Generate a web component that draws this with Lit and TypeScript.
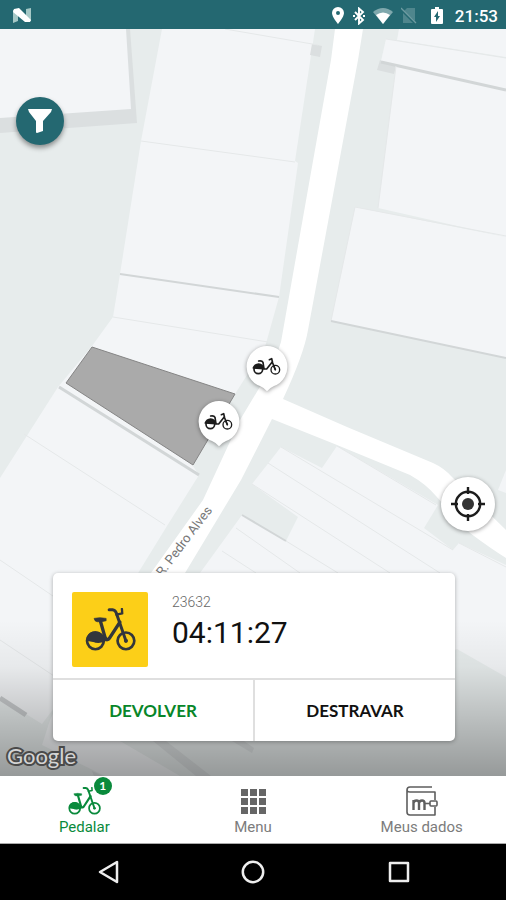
import { LitElement, html, css, svg } from "lit";
import { customElement, property, state } from "lit/decorators.js";
import { classMap } from "lit/directives/class-map.js";

const cityBike = svg`
  <g fill="none" stroke="currentColor" stroke-linecap="round" stroke-linejoin="round">
    <circle cx="31" cy="98" r="25" stroke-width="8" />
    <circle cx="122" cy="98" r="25" stroke-width="8" />
    <path d="M45 36 L61 92 Q66 98 73 90 L104 42" stroke-width="10" />
    <path d="M31 98 H56 L62 90" stroke-width="9" />
    <path d="M72 5 H82 Q90 6 93 14 L122 98" stroke-width="9" />
    <path d="M94 20 L111 16 L110 3" stroke-width="7" />
  </g>
  <path d="M27 31 Q44 27 63 31 V38 Q50 42 36 41 Q28 39 27 31 Z" fill="currentColor" stroke="currentColor" stroke-width="2" />
  <path d="M4 98 A27 27 0 0 1 54 82 L60 98 L40 104 Z" fill="currentColor" />
  <circle cx="122" cy="98" r="6" fill="currentColor" />
`;

@customElement("bike-icon")
export class BikeIcon extends LitElement {
  static styles = css`
    :host { display: block; }
    svg { display: block; width: 100%; height: auto; }
  `;
  render() {
    return html`<svg viewBox="0 0 152 128" aria-hidden="true">${cityBike}</svg>`;
  }
}

@customElement("status-bar")
export class StatusBar extends LitElement {
  static styles = css`
    :host {
      display: flex;
      align-items: center;
      justify-content: space-between;
      height: 29px;
      padding: 2px 8px 0 13px;
      box-sizing: border-box;
      background: #246871;
      color: #fff;
      font: 500 17px/20px Roboto, sans-serif;
    }
    svg { display: block; }
    .icons { display: flex; align-items: center; }
    .place { margin-right: 9px; }
    .bt { margin-right: 8px; }
    .wifi { margin-right: 8px; }
    .sim { margin-right: 14px; }
    .battery { margin-right: 12px; }
  `;
  render() {
    return html`
      <svg width="18" height="15" viewBox="0 0 18 15" aria-hidden="true">
        <path d="M0 2 L5 1 V13 L0 15 Z" fill="#a5c8c6" />
        <path d="M13 1 L18 0 V13 L13 14 Z" fill="#a5c8c6" />
        <path d="M1 1 L6 0 L18 12 L17 14 L12 14 L0 4 Z" fill="#fff" />
      </svg>
      <div class="icons">
        <svg class="place" width="12" height="17" viewBox="0 0 12 17" aria-hidden="true">
          <path fill-rule="evenodd" d="M6 0 A6 6 0 0 1 12 6 C12 10 6 17 6 17 C6 17 0 10 0 6 A6 6 0 0 1 6 0 Z M6 4 A2 2 0 1 0 6 8 A2 2 0 1 0 6 4 Z" fill="#fff" />
        </svg>
        <svg class="bt" width="12" height="18" viewBox="0 0 12 18" fill="none" stroke="#fff" stroke-width="1.9" aria-hidden="true">
          <path d="M2 5 L10 13 L6 16.5 V1.5 L10 5 L2 13" />
          <path d="M0 9 H2 M10 9 H12" stroke-width="2" />
        </svg>
        <svg class="wifi" width="20" height="16" viewBox="0 0 20 16" aria-hidden="true">
          <path d="M0 4 Q10 -4 20 4 L10 16 Z" fill="#7fa8ad" />
          <path d="M3 7 Q10 2 17 7 L10 16 Z" fill="#fff" />
        </svg>
        <svg class="sim" width="16" height="17" viewBox="0 0 16 17" aria-hidden="true">
          <path d="M6 1 H14 V14 L3 4 Z M2 6 L12 16 H2 Z" fill="#4f868d" />
          <path d="M0 1 L15 16" stroke="#6e9ba1" stroke-width="1.3" />
        </svg>
        <svg class="battery" width="12" height="17" viewBox="0 0 12 17" aria-hidden="true">
          <path d="M4 0 H8 V2 H11 Q12 2 12 3 V16 Q12 17 11 17 H1 Q0 17 0 16 V3 Q0 2 1 2 H4 Z" fill="#fff" />
          <path d="M7 4 L3 10 H5 V15 L9 9 H7 Z" fill="#246871" />
        </svg>
        <time>21:53</time>
      </div>
    `;
  }
}

@customElement("street-map")
export class StreetMap extends LitElement {
  static styles = css`
    :host { display: block; background: #e7ecec; }
    svg { display: block; width: 100%; height: 100%; }
    .block { fill: #f3f5f7; }
    .shade { fill: #dbdfe0; }
    .road { fill: #fff; }
    .lot { fill: #aaa; stroke: #858585; stroke-width: 1; }
    .hair { fill: none; stroke: #e5e8e9; stroke-width: 1; }
    .edge { fill: none; stroke: #d2d6d7; stroke-width: 2; }
    .bold { stroke-width: 3; }
    .heavy { stroke: #c8cbcd; stroke-width: 5; }
    .street { font: 13px Roboto, sans-serif; fill: #777; }
  `;
  render() {
    return html`
      <svg viewBox="0 29 506 747" preserveAspectRatio="none" role="img" aria-label="Mapa">
        <defs>
          <linearGradient id="fade" x1="0" y1="0" x2="0" y2="1">
            <stop offset="0" stop-color="#000" stop-opacity="0" />
            <stop offset="0.3" stop-color="#000" stop-opacity="0.05" />
            <stop offset="1" stop-color="#000" stop-opacity="0.35" />
          </linearGradient>
        </defs>
        <path class="shade" d="M120 29 H130 L137 123 L0 133 V110 Z" />
        <path class="block" d="M0 29 H126 L131 109 L0 118 Z" />
        <path class="block" d="M162 29 H315 L295 161 L298 163 L279 297 L265 347 L235 394 L193 466 L199 475 L167 526 L60 700 L42 724 L26 714 L0 697 V478 L58 387 L92 346 L113 317 L120 274 L141 141 Z" />
        <path class="shade" d="M312 44 L322 46 L320 57 L310 55 Z" />
        <path class="hair" d="M225 29 L318 45 M141 141 L295 162 M113 317 L268 342 M24 434 L165 525 M0 560 L100 628 M0 640 L60 680" />
        <path class="edge" d="M120 274 L279 297" />
        <path class="lot" d="M92 347 L235 394 L193 465 L66 383 Z" />
        <path class="edge bold" d="M59 387 L199 475" />

        <path class="block" d="M399 29 H506 V57 L397 40 Z" />
        <path class="shade" d="M380 60 L396 66 L394 74 L377 70 Z" />
        <path class="block" d="M386 39 L506 58 V90 L381 61 Z" />
        <path class="hair" d="M386 39 L506 58" />
        <path class="block" d="M396 66 L506 90 V237 L378 208 Z" />
        <path class="edge bold" d="M381 62 L506 90" />
        <path class="block" d="M355 207 L506 237 V358 L331 321 Z" />
        <path class="hair" d="M396 66 L378 208 M331 321 L355 207 L506 236" />
        <path class="edge" d="M331 321 L506 358" />
        <path class="block" d="M506 470 V493 L498 490 Z" />

        <path class="block" d="M281 447 L322 468 L337 446 L438 505 L424 528 L453 550 L459 543 L506 565 V677 L457 649 L300 720 L180 605 L200 573 L242 515 L286 541 L298 517 L252 484 Z" />
        <path class="hair" d="M281 447 L453 550 M268 463 L440 573 M252 484 L390 573 M286 541 L338 573 M236 528 L300 573 M222 551 L256 573 M337 446 L436 505 M459 543 L506 567" />
        <path class="edge" d="M242 515 L286 541" />

        <path class="block" d="M50 720 L60 700 L120 741 L180 776 H105 L42 745 Z" />
        <path class="edge heavy" d="M0 698 L26 715" />
        <path class="shade" d="M153 741 H166 L211 776 H196 Z M232 741 H244 L254 748 L252 753 Z M92 771 L103 776 H94 Z" />

        <path class="road" d="M335 29 H363 L358 60 L331 206 L308 330 Q304 354 283 399 L347 427 L433 463 Q444 468 452 477 L506 530 V558 Q490 548 470 533 L436 496 Q426 484 410 475 L337 445 L272 419 L241 480 L185 573 L140 640 L110 640 L151 573 L203 500 L240 420 L264 380 Q275 362 281 342 L313 161 L331 60 Z" />
        <text class="street" text-anchor="middle" dominant-baseline="central" transform="translate(184 541) rotate(-53)">R. Pedro Alves</text>
        <rect x="0" y="620" width="506" height="156" fill="url(#fade)" />
      </svg>
    `;
  }
}

@customElement("bike-pin")
export class BikePin extends LitElement {
  static styles = css`
    :host { display: block; }
    button { display: block; padding: 0; border: 0; background: none; cursor: pointer; }
    svg { display: block; filter: drop-shadow(0 1px 2px rgba(0, 0, 0, 0.4)); }
  `;
  render() {
    return html`
      <button aria-label="Estação">
        <svg width="42" height="46" viewBox="0 0 126 138">
          <path d="M63 0 A62 62 0 0 1 84 120 Q72 125 63 136 Q54 125 42 120 A62 62 0 0 1 63 0 Z" fill="#fff" />
          <g transform="translate(20 35)" fill="none" stroke="#1c1c1c" stroke-width="5" stroke-linecap="round" stroke-linejoin="round">
            <circle cx="17" cy="35" r="13" />
            <circle cx="68" cy="36" r="13" stroke-width="4" />
            <path d="M2 31 Q6 20 18 19 Q30 20 33 33 Z" fill="#1c1c1c" />
            <path d="M18 10 Q28 8 31 14 L34 34 L42 34 L58 14" />
            <path d="M50 6 L57 3 L60 16 L68 36" />
            <path d="M68 36 L64 27" stroke-width="4" />
          </g>
        </svg>
      </button>
    `;
  }
}

@customElement("ride-card")
export class RideCard extends LitElement {
  @property() code = "";
  @property() elapsed = "";

  static styles = css`
    :host {
      display: block;
      background: #fff;
      border-radius: 5px;
      box-shadow: 0 1px 4px rgba(0, 0, 0, 0.3);
      font-family: Roboto, sans-serif;
      overflow: hidden;
    }
    .info { display: flex; gap: 24px; padding: 19px 19px 11px; }
    .tile {
      display: flex;
      align-items: center;
      justify-content: center;
      width: 76px;
      height: 75px;
      border-radius: 2px;
      background: #fccf18;
      color: #33363c;
    }
    .tile bike-icon { width: 51px; }
    .code { font-size: 14px; line-height: 20px; font-weight: 300; color: #666; }
    .time { font-size: 30px; line-height: 42px; color: #111; }
    .actions { display: flex; border-top: 2px solid #dfdfdf; }
    button {
      flex: 1;
      height: 61px;
      padding: 0;
      border: 0;
      background: none;
      font: 700 17px/20px Lato, sans-serif;
      color: #111;
      cursor: pointer;
    }
    .return { border-right: 2px solid #dfdfdf; color: #078629; }
  `;
  render() {
    return html`
      <div class="info">
        <div class="tile"><bike-icon></bike-icon></div>
        <div>
          <div class="code">${this.code}</div>
          <div class="time">${this.elapsed}</div>
        </div>
      </div>
      <div class="actions">
        <button class="return">DEVOLVER</button>
        <button>DESTRAVAR</button>
      </div>
    `;
  }
}

@customElement("tab-bar")
export class TabBar extends LitElement {
  @state() private active = "Pedalar";

  static styles = css`
    :host {
      display: flex;
      height: 68px;
      box-sizing: border-box;
      background: #fff;
      border-bottom: 1px solid #aaa;
    }
    button {
      flex: 1 1 0;
      display: flex;
      flex-direction: column;
      align-items: center;
      padding: 8px 0 0;
      border: 0;
      background: none;
      color: #7c7c7c;
      font: 15px/18px Roboto, sans-serif;
      cursor: pointer;
    }
    button.on { color: #0a8a3c; }
    .icon { position: relative; display: flex; align-items: center; justify-content: center; height: 34px; }
    bike-icon { width: 33px; }
    .badge {
      position: absolute;
      left: 26px;
      top: -7px;
      width: 18px;
      height: 18px;
      border-radius: 50%;
      background: #0a8a3c;
      color: #fff;
      font: 700 12px/18px Lato, sans-serif;
      text-align: center;
    }
    svg { display: block; }
  `;

  private tab(name: string, icon: unknown) {
    return html`
      <button class=${classMap({ on: this.active === name })} @click=${() => (this.active = name)}>
        <span class="icon">${icon}</span>
        <span>${name}</span>
      </button>
    `;
  }

  render() {
    const cells = [0, 9, 18];
    return html`
      ${this.tab("Pedalar", html`<bike-icon></bike-icon><span class="badge">1</span>`)}
      ${this.tab("Menu", html`
        <svg width="25" height="25" viewBox="0 0 25 25" fill="#666" aria-hidden="true">
          ${cells.map((y) => cells.map((x) => svg`<rect x=${x} y=${y} width="7" height="7" />`))}
        </svg>`)}
      ${this.tab("Meus dados", html`
        <svg width="32" height="30" viewBox="0 0 32 30" fill="none" stroke="#5e5e5e" stroke-width="1.6" stroke-linejoin="round" aria-hidden="true">
          <path d="M26 1 H4 Q1 1 1 4 V26 Q1 29 4 29 H29 V21 M29 14 V6 H4 Q1 6 1 4" />
          <path d="M7.5 24 V14 M7.5 17 Q8 14.500 10.500 14.500 Q13 14.500 13 17 V24 M13 17 Q13.500 14.500 16 14.500 Q18.500 14.500 18.500 17 V24" stroke-width="2.4" />
          <rect x="24" y="15" width="7" height="5" rx="1" />
          <path d="M18 17.5 H24" />
        </svg>`)}
    `;
  }
}

@customElement("system-nav")
export class SystemNav extends LitElement {
  static styles = css`
    :host { display: flex; height: 56px; padding: 0 7%; background: #000; }
    button {
      flex: 1;
      display: flex;
      align-items: center;
      justify-content: center;
      padding: 0;
      border: 0;
      background: none;
      cursor: pointer;
    }
    svg { display: block; fill: none; stroke: #eee; stroke-width: 2.5; stroke-linejoin: round; }
  `;
  render() {
    return html`
      <button aria-label="Voltar"><svg width="24" height="24" viewBox="0 0 24 24"><path d="M21 2 V22 L4 12 Z" /></svg></button>
      <button aria-label="Início"><svg width="24" height="24" viewBox="0 0 24 24"><circle cx="12" cy="12" r="10.2" /></svg></button>
      <button aria-label="Recentes"><svg width="24" height="24" viewBox="0 0 24 24"><rect x="4" y="3" width="18" height="18" /></svg></button>
    `;
  }
}

interface Pin { x: number; y: number; }

@customElement("app-root")
export class AppRoot extends LitElement {
  private pins: Pin[] = [
    { x: 52.8, y: 48.6 },
    { x: 43.3, y: 55.9 },
  ];

  static styles = css`
    :host { display: flex; flex-direction: column; min-height: 100vh; }
    .stage {
      position: relative;
      flex: 1;
      display: flex;
      flex-direction: column;
      justify-content: space-between;
      overflow: hidden;
    }
    street-map { position: absolute; inset: 0; }
    bike-pin { position: absolute; transform: translate(-50%, -100%); }
    .round {
      display: flex;
      align-items: center;
      justify-content: center;
      padding: 0;
      border: 0;
      border-radius: 50%;
      cursor: pointer;
    }
    .round svg { display: block; }
    .filter {
      position: relative;
      width: 48px;
      height: 48px;
      margin: 68px 16px 0;
      background: #246871;
      box-shadow: 0 3px 5px rgba(0, 0, 0, 0.4);
    }
    .bottom { position: relative; display: flex; flex-direction: column; gap: 42px; }
    .locate {
      align-self: flex-end;
      width: 54px;
      height: 54px;
      margin-right: 11px;
      background: #fff;
      box-shadow: 0 1px 4px rgba(0, 0, 0, 0.4);
    }
    ride-card { margin: 0 51px 35px 53px; }
    .google {
      position: absolute;
      left: 7px;
      bottom: 7px;
      font: 400 22px/26px Lato, sans-serif;
      color: #d4d4d4;
      -webkit-text-stroke: 4px #4a4a4a;
      paint-order: stroke fill;
    }
  `;

  render() {
    return html`
      <status-bar></status-bar>
      <main class="stage">
        <street-map></street-map>
        ${this.pins.map((p) => html`<bike-pin style="left:${p.x}%;top:${p.y}%"></bike-pin>`)}
        <button class="round filter" aria-label="Filtrar">
          <svg width="24" height="26" viewBox="0 0 24 26"><path d="M0 1 H24 L23 4 L15 13 V23 L9 25 Q8 25 8 24 V13 L1 4 Z" fill="#fff" /></svg>
        </button>
        <div class="bottom">
          <button class="round locate" aria-label="Minha localização">
            <svg width="34" height="34" viewBox="0 0 34 34" fill="none" stroke="#1c1c1c" stroke-width="2.4">
              <circle cx="17" cy="17" r="12.2" />
              <path d="M17 0 V7 M17 27 V34 M0 17 H7 M27 17 H34" />
              <circle cx="17" cy="17" r="6" fill="#333" stroke="none" />
            </svg>
          </button>
          <ride-card code="23632" elapsed="04:11:27"></ride-card>
        </div>
        <span class="google">Google</span>
      </main>
      <tab-bar></tab-bar>
      <system-nav></system-nav>
    `;
  }
}
